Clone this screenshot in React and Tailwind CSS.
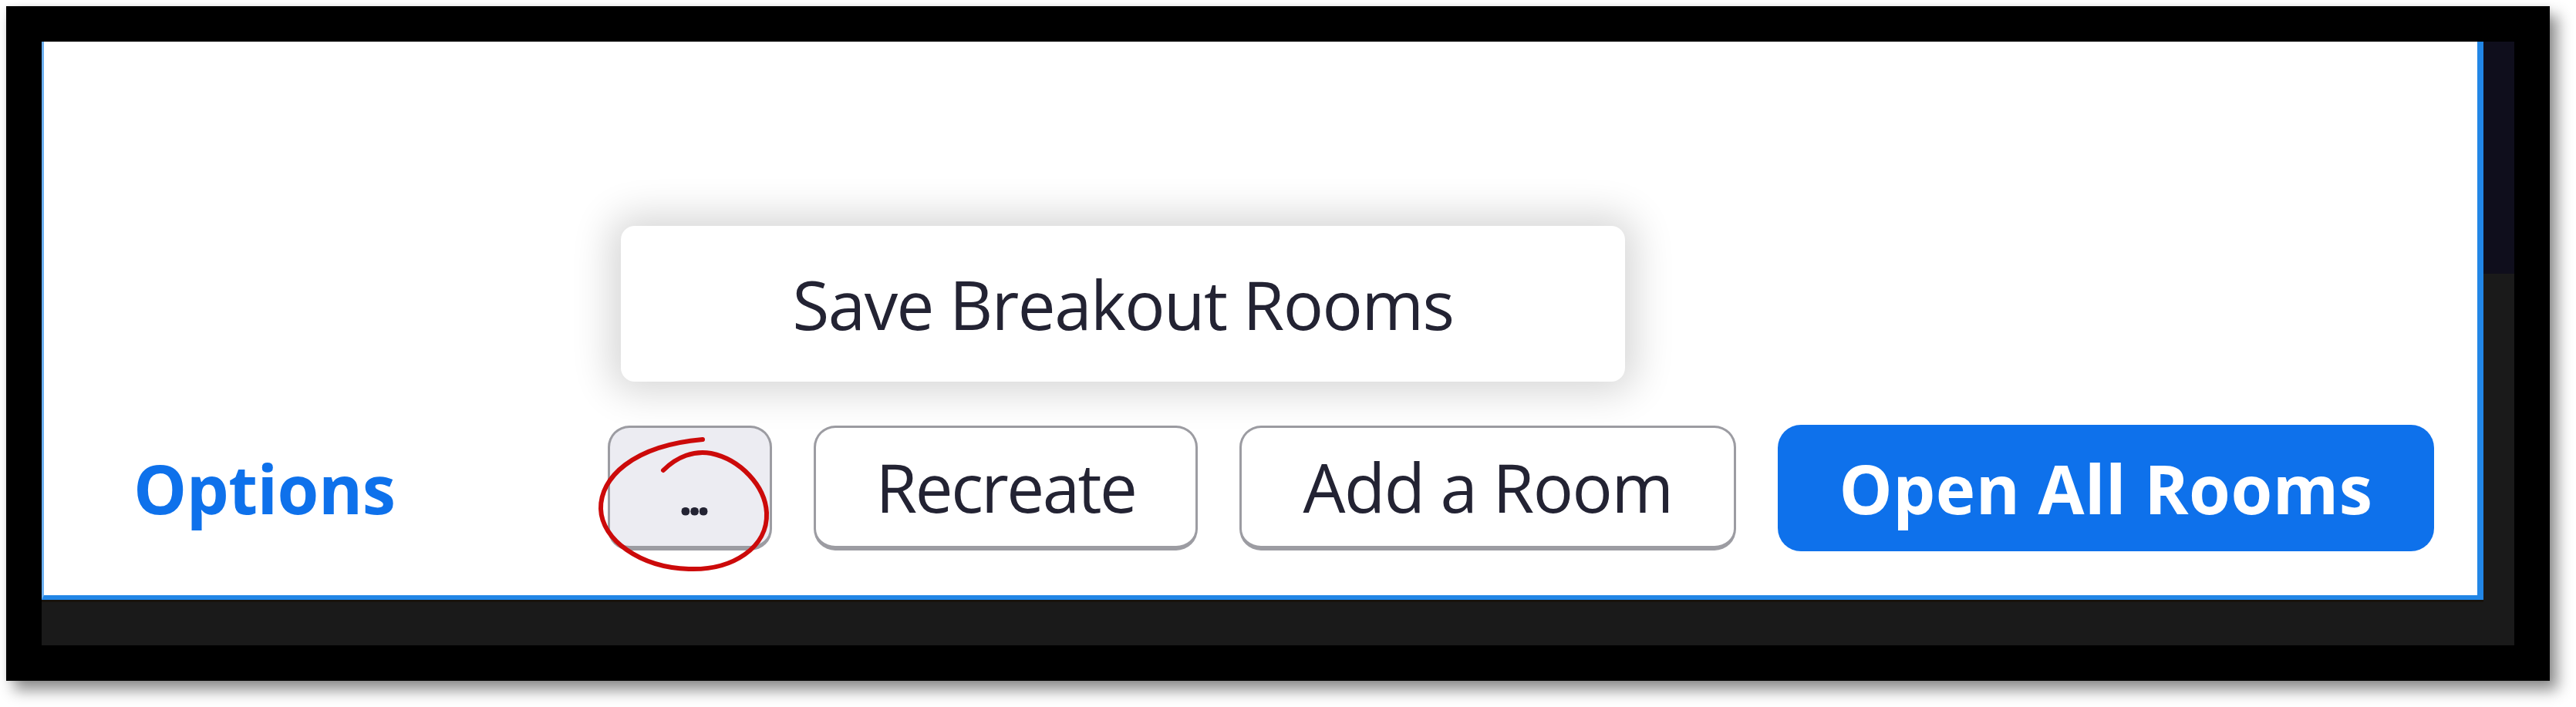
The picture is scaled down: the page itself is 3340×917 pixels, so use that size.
export default function App() {
  const font = "font-['Open_Sans',_'Liberation_Sans',_sans-serif]";
  return (
    <div className={`w-[3340px] h-[917px] bg-white pt-[8px] pl-[8px] ${font}`}>
      <div className="w-[3298px] h-[875px] bg-black pt-[46px] pl-[46px] shadow-[10px_12px_18px_rgba(0,0,0,0.45),0_0_6px_rgba(0,0,0,0.08)]">
        <div className="flex w-[3206px] h-[783px]">
          <div className="flex flex-col w-[3166px]">
            <div className="relative h-[724px] box-border bg-white border-l-[3px] border-l-[#6cb0f0] border-r-[8px] border-r-[#2286e6] border-b-[6px] border-b-[#2286e6] flex items-end">
              <div className="flex w-full items-center justify-between pl-[116px] pr-[56px] pb-[57px]">
                <span className="text-[87px] leading-none font-bold text-[#0e71eb] tracking-[-0.5px]">
                  Options
                </span>
                <div className="flex gap-[54px] items-center">
                  <button className="w-[213px] h-[162px] rounded-[28px] bg-[#ececf2] border-[3px] border-b-[6px] border-[#9c9ca2] flex items-center justify-center text-[62px] leading-none font-bold text-[#232333] tracking-[-6px] pl-[6px] pt-[24px]">
                    ...
                  </button>
                  <button className="w-[498px] h-[162px] rounded-[28px] bg-white border-[3px] border-b-[6px] border-[#9c9ca2] flex items-center justify-center text-[87px] leading-none text-[#232333] tracking-[-2.5px]">
                    Recreate
                  </button>
                  <button className="w-[644px] h-[162px] rounded-[28px] bg-white border-[3px] border-b-[6px] border-[#9c9ca2] flex items-center justify-center text-[87px] leading-none text-[#232333] tracking-[-1.5px]">
                    Add a Room
                  </button>
                  <button className="w-[851px] h-[164px] rounded-[30px] bg-[#0e71eb] flex items-center justify-center text-[87px] leading-none font-bold text-white tracking-[0.5px]">
                    Open All Rooms
                  </button>
                </div>
              </div>

              <div className="absolute left-[748px] top-[239px] w-[1302px] h-[202px] rounded-[18px] bg-white shadow-[0_0_50px_14px_rgba(0,0,0,0.16)] flex items-center justify-center">
                <span className="text-[87px] leading-none text-[#232333] tracking-[-1.5px]">
                  Save Breakout Rooms
                </span>
              </div>

              <svg
                className="absolute left-[703px] top-[496px]"
                width="260"
                height="210"
                viewBox="0 0 260 210"
                fill="none"
              >
                <path
                  d="M100,60 C118,42 140,34 162,38 C200,46 232,80 234,115 C236,160 190,190 133,188 C70,186 20,150 19,110 C18,70 60,28 151,20"
                  stroke="#cc0a0a"
                  strokeWidth="6"
                  strokeLinecap="round"
                />
              </svg>
            </div>
            <div className="flex-1 bg-[#1a1a1a] border-t-[3px] border-t-[#17120c]" />
          </div>
          <div className="w-[40px] flex flex-col">
            <div className="h-[301px] bg-[#0f0e1c]" />
            <div className="flex-1 bg-[#1a1a1a]" />
          </div>
        </div>
      </div>
    </div>
  );
}
